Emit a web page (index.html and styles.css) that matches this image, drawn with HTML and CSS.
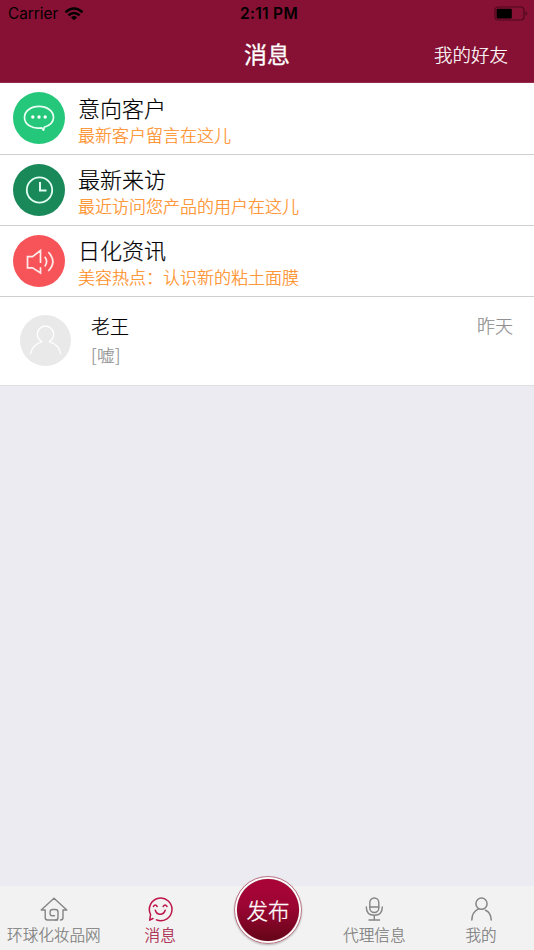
FILE: index.html
```
<!DOCTYPE html>
<html lang="zh-CN">
<head>
<meta charset="utf-8">
<title>消息</title>
<link rel="stylesheet" href="styles.css">
</head>
<body>
<div class="app">
  <header class="header">
    <div class="status">
      <div class="carrier">
        <span>Carrier</span>
        <svg width="20" height="14" viewBox="0 0 20 14" fill="none" stroke="#000" stroke-width="2.5"><path d="M1.5 5.2Q10-2.1 18.5 5.2M4.4 8.3Q10 3.6 15.6 8.3"/><path d="M6.9 10.2Q10 7.8 13.1 10.2L10 13.3Z" fill="#000" stroke="none"/></svg>
      </div>
      <span class="time">2:11 PM</span>
      <svg class="battery" width="34" height="16" viewBox="0 0 34 16"><rect x="1" y="1" width="29" height="13" rx="3" fill="none" stroke="#4d091e" stroke-width="1.2"/><rect x="2.6" y="2.7" width="15.2" height="9.8" rx="1" fill="#000"/><path d="M31.6 5.3Q33.2 6 33.2 7.5T31.6 9.7Z" fill="#4d091e"/></svg>
    </div>
    <div class="nav">
      <h1 class="nav-title">消息</h1>
      <span class="nav-action">我的好友</span>
    </div>
  </header>

  <main class="content">
    <section class="entry">
      <svg class="entry-icon" viewBox="0 0 52 52"><circle cx="26" cy="26" r="26" fill="#25c77a"/><path d="M30.5 38.2L28.6 35.8C19 37.5 11.5 32.3 11.5 25.5C11.5 19 18 14.3 26 14.3S40.5 19 40.5 25.5C40.5 29.8 37.5 33.2 31.2 35.2Z" fill="none" stroke="#e9fff4" stroke-width="1.7" stroke-linejoin="round"/><g fill="#fff"><circle cx="19.8" cy="25" r="1.7"/><circle cx="26" cy="25" r="1.7"/><circle cx="32.2" cy="25" r="1.7"/></g></svg>
      <div class="entry-text">
        <h2>意向客户</h2>
        <p>最新客户留言在这儿</p>
      </div>
    </section>
    <section class="entry">
      <svg class="entry-icon" viewBox="0 0 52 52"><circle cx="26" cy="26" r="26" fill="#19895a"/><circle cx="26.5" cy="26" r="12.7" fill="none" stroke="#e3fff3" stroke-width="1.8"/><path d="M27 18V26.5H33.5" fill="none" stroke="#e3fff3" stroke-width="2"/></svg>
      <div class="entry-text">
        <h2>最新来访</h2>
        <p>最近访问您产品的用户在这儿</p>
      </div>
    </section>
    <section class="entry">
      <svg class="entry-icon" viewBox="0 0 52 52"><circle cx="26" cy="26" r="26" fill="#f75459"/><g fill="none" stroke="#ffeaea" stroke-width="1.7"><path d="M27.5 28V15.5L19.5 21.6H14.5V32.8H19.5L27.5 38V32.3"/><path d="M31.7 21.8Q35.6 26.5 31.7 31.5M35.3 17.2Q44.5 26.5 35.3 36"/></g></svg>
      <div class="entry-text">
        <h2>日化资讯</h2>
        <p>美容热点：认识新的粘土面膜</p>
      </div>
    </section>
    <section class="chat">
      <svg class="avatar" viewBox="0 0 52 52"><circle cx="26" cy="26" r="26" fill="#e9e9e9"/><g fill="none" stroke="#fff" stroke-width="1.3"><path d="M22.5 27.2A8.3 8.3 0 1 1 29.5 27.2"/><path d="M10.5 40C12 33 17 28.8 22.5 27.2M29.5 27.2C35.5 28.8 40.5 33 41.5 40"/></g></svg>
      <div class="chat-text">
        <h3>老王</h3>
        <p>[嘘]</p>
      </div>
      <time class="chat-time">昨天</time>
    </section>
  </main>

  <nav class="tabs">
    <a class="tab">
      <svg width="28" height="26" viewBox="0 0 28 26" fill="none" stroke="#858585" stroke-width="1.4" stroke-linejoin="round" stroke-linecap="round"><path d="M17.5 24H7.5Q5.2 24 5.2 21.5V14H1.2L14 2.2L26.8 14H23V21.5Q23 24 20.5 24"/><path d="M14.5 19.7H12.2Q10.1 19.7 10.1 17.5V16Q10.1 13.5 12.6 13.5H15.5Q18 13.5 18 16V21.5Q18 24 15.5 24"/></svg>
      <span>环球化妆品网</span>
    </a>
    <a class="tab active">
      <svg width="28" height="26" viewBox="0 0 28 26" fill="none" stroke="#bd1449" stroke-width="1.5" stroke-linecap="round" stroke-linejoin="round"><path d="M4.6 18.5A11.3 11.3 0 1 1 10.5 23.9M4.6 18.5L3.7 24.2L7 22.5"/><path d="M7.4 10.5Q9.3 7.7 11.2 10.5M17.2 10.5Q19.1 7.7 21 10.5M9.3 14.3Q10.5 18.3 14.2 18.3T19.2 14.3"/></svg>
      <span>消息</span>
    </a>
    <div class="publish-slot"><button class="publish">发布</button></div>
    <a class="tab">
      <svg width="28" height="26" viewBox="0 0 28 26" fill="none" stroke="#858585" stroke-width="1.4" stroke-linecap="round"><rect x="9.8" y="2" width="9" height="14.5" rx="4.5"/><path d="M9.8 11H18.8M6.3 11C6.3 16.5 9.5 19.3 14.3 19.3S22.3 16.5 22.3 11M14.3 19.3V24M9 24H19.6"/></svg>
      <span>代理信息</span>
    </a>
    <a class="tab">
      <svg width="28" height="26" viewBox="0 0 28 26" fill="none" stroke="#858585" stroke-width="1.5" stroke-linecap="round"><circle cx="14.5" cy="7.7" r="5.6"/><path d="M4.8 24Q5 16 11.5 12.9M18.5 14.3C22.5 16 24 19.5 24.2 24"/></svg>
      <span>我的</span>
    </a>
  </nav>
</div>
</body>
</html>
```
FILE: styles.css
```
* {
  box-sizing: border-box;
}

body,
h1,
h2,
h3,
p {
  margin: 0;
  font-weight: 300;
}

body {
  font-family: "Noto Sans CJK SC", sans-serif;
  color: #000;
}

svg {
  display: block;
}

.app {
  display: flex;
  flex-direction: column;
  width: 534px;
  height: 950px;
  overflow: hidden;
  background: #ebebf1;
}

.header {
  height: 83px;
  background: #871134;
  border-bottom: 1px solid #962c4b;
}

.status {
  display: grid;
  grid-template-columns: 1fr auto 1fr;
  align-items: center;
  height: 28px;
  padding: 0 6px 0 8px;
  font: 15.3px/28px Inter, sans-serif;
}

.carrier {
  display: flex;
  align-items: center;
  gap: 6px;
}

.time {
  padding-left: 2px;
  font-size: 15.5px;
  font-weight: 600;
  letter-spacing: 0.3px;
}

.battery {
  justify-self: end;
}

.nav {
  display: grid;
  grid-template-columns: 1fr auto 1fr;
  align-items: center;
  height: 52px;
  padding: 0 26px;
  color: #fff;
}

.nav-title {
  grid-column: 2;
  margin-top: -2px;
  font-size: 23px;
  font-weight: 400;
  line-height: 50px;
  -webkit-text-stroke: 0.3px #fff;
}

.nav-action {
  justify-self: end;
  font-size: 18.5px;
  line-height: 50px;
}

.nav-action,
.content,
.tabs {
  -webkit-text-stroke-width: 0.2px;
}

.content {
  flex: 1;
}

.entry {
  display: flex;
  align-items: center;
  gap: 13px;
  height: 71px;
  padding-left: 13px;
  background: #fff;
  border-bottom: 1px solid #cfcfd1;
}

.entry:first-child {
  height: 72px;
}

.entry-icon {
  width: 52px;
  height: 52px;
  margin-top: -1px;
}

.entry-text {
  padding-top: 3px;
}

.entry h2 {
  font-size: 22px;
  line-height: 28px;
}

.entry p {
  font-size: 17px;
  line-height: 27px;
  color: #ff8d1c;
}

.chat {
  display: flex;
  height: 89px;
  padding: 18px 21px 0 20px;
  background: #fff;
  border-bottom: 1px solid #dedee3;
}

.avatar {
  width: 51px;
  height: 51px;
}

.chat-text {
  flex: 1;
  padding-left: 20px;
}

.chat h3 {
  margin-top: -3px;
  font-size: 19px;
  line-height: 28px;
}

.chat p {
  font-size: 17.5px;
  line-height: 30px;
  letter-spacing: 0.5px;
  color: #909090;
}

.chat-time {
  margin-top: -4px;
  font-size: 18px;
  line-height: 28px;
  color: #909090;
}

.tabs {
  display: grid;
  grid-template-columns: repeat(5, 1fr);
  height: 64px;
  background: #f2f2f2;
}

.tab {
  display: flex;
  flex-direction: column;
  align-items: center;
  padding-top: 10px;
  padding-left: 1px;
  color: #7d7d7d;
  font-size: 15.6px;
  line-height: 25px;
  white-space: nowrap;
}

.tab.active {
  padding-left: 0;
  color: #a71843;
}

.publish-slot {
  display: flex;
  justify-content: center;
  padding-left: 2px;
}

.publish {
  width: 68px;
  height: 68px;
  margin-top: -10px;
  padding: 0;
  border: 1px solid #bd7888;
  border-radius: 50%;
  background:
    radial-gradient(circle, transparent 30.5px, #b66a7c 31px, #fff 31.6px, #fff 33px),
    linear-gradient(#a90438 10%, #9b0532 45%, #650519 95%);
  background-origin: border-box;
  box-shadow: 0 1px 2px #0004;
  color: #fff;
  font: 300 21.5px/66px "Noto Sans CJK SC", sans-serif;
  -webkit-text-stroke-width: 0.3px;
}
```
